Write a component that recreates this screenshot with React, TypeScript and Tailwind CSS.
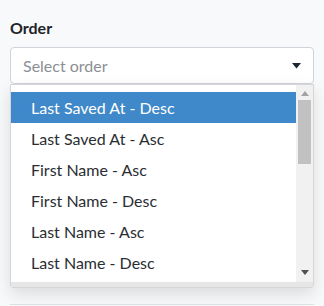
const options = [
  "Last Saved At - Desc",
  "Last Saved At - Asc",
  "First Name - Asc",
  "First Name - Desc",
  "Last Name - Asc",
  "Last Name - Desc",
];

export default function App() {
  return (
    <div className="h-[306px] w-[324px] overflow-hidden bg-[#f8f9fa] px-[10px] pt-[18px] font-['Lato',sans-serif] text-[#212529]">
      <div className="text-[16px] leading-[20px] font-bold">Order</div>

      {/* Select control */}
      <div className="relative mt-[9px]">
        <div className="flex h-[37px] items-center justify-between rounded-[4px] border border-[#ced4da] bg-white pr-[12px] pl-[12px] text-[16px] text-[#8b8f94]">
          <span>Select order</span>
          <svg width="9" height="6" viewBox="0 0 9 6" className="mt-[1px]">
            <path d="M0 0h9L4.5 5.5z" fill="#1e2633" />
          </svg>
        </div>

        {/* Open menu */}
        <div className="absolute top-[37px] left-0 z-10 flex h-[204px] w-full flex-col overflow-hidden rounded-b-[3px] border border-[#d6d6d6] bg-white shadow-[0_6px_16px_rgba(0,0,0,0.12)]">
          <div className="flex min-h-0 flex-1">
            <div className="flex-1 pt-[7px]">
              {options.map((o, i) => (
                <div
                  key={o}
                  className={
                    i === 0
                      ? "flex h-[31px] items-center bg-[#3f88c9] pl-[20px] text-[16px] text-white"
                      : "flex h-[31px] items-center pl-[20px] text-[16px] text-[#2a2e33]"
                  }
                >
                  {o}
                </div>
              ))}
            </div>
            <div className="flex w-[17px] flex-col items-center bg-[#f1f1f1]">
              <svg width="8" height="5" viewBox="0 0 8 5" className="mt-[6px]">
                <path d="M4 0L8 5H0z" fill="#a3a3a3" />
              </svg>
              <div className="mt-[4px] h-[64px] w-[13px] bg-[#c1c1c1]" />
              <div className="flex-1" />
              <svg width="8" height="5" viewBox="0 0 8 5" className="mb-[7px]">
                <path d="M0 0h8L4 5z" fill="#505050" />
              </svg>
            </div>
          </div>
          <div className="h-[5px] bg-[#e6e6e6]" />
        </div>
      </div>

      <div className="mt-[220px] h-px bg-[#dee2e6]" />
    </div>
  );
}
